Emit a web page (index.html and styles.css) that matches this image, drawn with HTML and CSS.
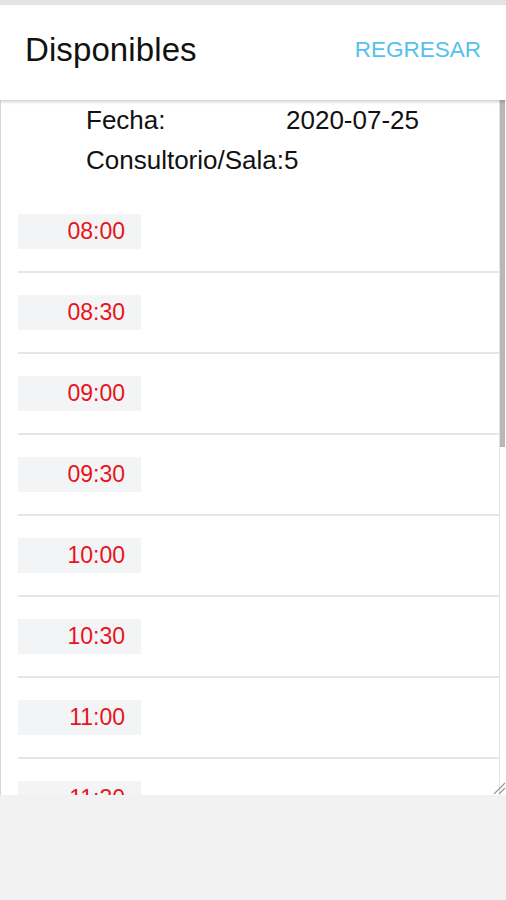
FILE: index.html
```html
<!DOCTYPE html>
<html lang="es">
<head>
    <meta charset="UTF-8">
    <meta name="viewport" content="width=device-width, initial-scale=1.0">
    <title>Disponibles</title>
    <link rel="stylesheet" href="styles.css">
</head>
<body>

    <div class="app">
        <div class="header">
            <h1>Disponibles</h1>
            <a href="#" class="back">REGRESAR</a>
        </div>

        <div class="panel">
            <div class="content">
                <div class="info">
                    <div class="info-row">
                        <span class="label">Fecha:</span>
                        <span>2020-07-25</span>
                    </div>
                    <div class="info-row">Consultorio/Sala:5</div>
                </div>

                <ul class="slots">
                    <li><span class="time">08:00</span></li>
                    <li><span class="time">08:30</span></li>
                    <li><span class="time">09:00</span></li>
                    <li><span class="time">09:30</span></li>
                    <li><span class="time">10:00</span></li>
                    <li><span class="time">10:30</span></li>
                    <li><span class="time">11:00</span></li>
                    <li><span class="time">11:30</span></li>
                </ul>
            </div>

            <!-- scroll track, drawn by hand -->
            <div class="track">
                <div class="thumb"></div>
            </div>

            <svg class="grip" width="14" height="14" viewBox="0 0 14 14">
                <line x1="2" y1="13" x2="13" y2="2" stroke="#9a9a9a" stroke-width="1.2"/>
                <line x1="7" y1="13" x2="13" y2="7" stroke="#9a9a9a" stroke-width="1.2"/>
            </svg>
        </div>
    </div>

</body>
</html>
```

FILE: styles.css
```css
body {
    margin: 0;
    font-family: "Liberation Sans", Arial, sans-serif;
    background-color: #f2f2f2; /* gray area below the panel */
    color: #111;
}

.app {
    border-top: 5px solid #e4e4e4;
}

.header {
    height: 90px;
    padding: 0 25px 5px;
    display: flex;
    align-items: center;
    justify-content: space-between;
    background-color: white;
    box-shadow: 0 2px 3px rgba(0, 0, 0, 0.18);
    position: relative;
    z-index: 1;
}

.header h1 {
    margin: 0;
    font-size: 33px;
    font-weight: normal;
    letter-spacing: 0.1px;
}

.back {
    text-decoration: none;
    color: #55c1ec; /* light blue link */
    font-size: 22.5px;
}

.panel {
    height: 695px;
    display: flex;
    position: relative;
    background-color: white;
    border-left: 1px solid #d6d6d6;
    box-shadow: 0 3px 4px rgba(0, 0, 0, 0.12);
}

.content {
    flex: 1;
    overflow: hidden;
}

.track {
    width: 5px;
    margin-right: 1px;
    border-left: 1px solid #e2e2e2;
}

.thumb {
    height: 347px;
    background-color: #b8b8b8;
}

.grip {
    position: absolute;
    right: 0;
    bottom: 0;
}

.info {
    padding-left: 85px;
    font-size: 26px;
    line-height: 40px;
}

.info-row {
    display: flex;
}

.label {
    width: 200px;
}

.slots {
    list-style: none;
    margin: 12px 0 0 17px;
    padding: 0;
}

.slots li {
    padding: 22px 0;
    border-bottom: 2px solid #e6e6e6;
}

.time {
    display: block;
    width: 107px;
    height: 35px;
    line-height: 35px;
    padding-right: 16px;
    text-align: right;
    background-color: #f3f4f6;
    color: #e8141b; /* red times */
    font-size: 23px;
}
```
